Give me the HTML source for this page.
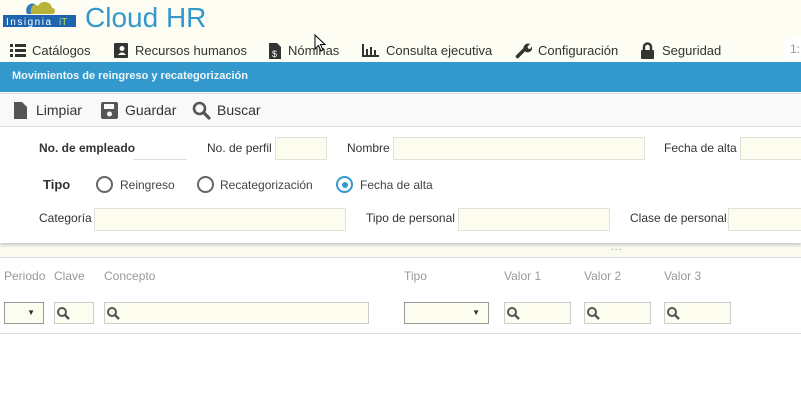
<!DOCTYPE html>
<html><head><meta charset="utf-8"><style>
*{box-sizing:border-box;margin:0;padding:0}
body{width:801px;height:405px;overflow:hidden;background:#fff;font-family:"Liberation Sans",sans-serif;position:relative;color:#333}
.a{position:absolute;white-space:nowrap}
.inp{position:absolute;background:#fdfdef;border:1px solid #e2e2d8}
.m{font-size:13px;color:#333;top:43px}
.l{font-size:12px;color:#333}
.g{font-size:12px;color:#999;top:269px}
.f{position:absolute;top:302px;height:22px;background:#fdfdef;border:1px solid #ccc}
.sel{position:absolute;top:302px;height:22px;background:#fdfdef;border:1px solid #999}
.sel:after{content:"▼";position:absolute;right:8px;top:5px;font-size:8px;color:#333}
.rad{position:absolute;width:17px;height:17px;border:2px solid #666;border-radius:50%;top:176px}
</style></head><body>
<div class="a" style="left:0;top:0;width:801px;height:62px;background:#fdfdf3"></div>
<svg class="a" style="left:3px;top:0" width="75" height="28" viewBox="0 0 75 28">
<path d="M24 14 C22 6 30 2 35 6 C38 0 48 1 49 8 C53 8 53 14 49 14 Z" fill="#b7b339"/>
<path d="M24 14 C21 7 27 2 32 4 C28 6 27 10 28 14 Z" fill="#2b7bc0"/>
<rect x="0" y="15" width="73" height="12" fill="#1f64b0"/>
<text x="3" y="25" font-size="10" fill="#fff" font-family="Liberation Sans" textLength="45">Insignia</text>
<text x="56" y="25" font-size="10" fill="#b7e060" font-family="Liberation Sans">iT</text>
</svg>
<div class="a" style="left:85px;top:2px;font-size:28px;color:#3399cc">Cloud HR</div>
<svg class="a" style="left:10px;top:44px" width="16" height="13"><g fill="#333"><rect x="0" y="0" width="3" height="3"/><rect x="0" y="5" width="3" height="3"/><rect x="0" y="10" width="3" height="3"/><rect x="5" y="0" width="11" height="3"/><rect x="5" y="5" width="11" height="3"/><rect x="5" y="10" width="11" height="3"/></g></svg>
<div class="a m" style="left:32px">Catálogos</div>
<svg class="a" style="left:114px;top:43px" width="14" height="15"><rect width="14" height="15" rx="1" fill="#333"/><circle cx="8" cy="5.5" r="2.5" fill="#fdfdf3"/><path d="M4 12 Q8 7 12 12Z" fill="#fdfdf3"/></svg>
<div class="a m" style="left:135px">Recursos humanos</div>
<svg class="a" style="left:269px;top:43px" width="12" height="16"><path d="M0 0H8L12 4V16H0Z" fill="#333"/><text x="3" y="14" font-size="9" fill="#fdfdf3" font-family="Liberation Sans">$</text></svg>
<div class="a m" style="left:288px">Nóminas</div>
<svg class="a" style="left:362px;top:44px" width="17" height="13"><g fill="#333"><rect x="0" y="0" width="2" height="13"/><rect x="0" y="11" width="17" height="2"/><rect x="4" y="5" width="2" height="6"/><rect x="8" y="3" width="2" height="8"/><rect x="12" y="6" width="2" height="5"/></g></svg>
<div class="a m" style="left:386px">Consulta ejecutiva</div>
<svg class="a" style="left:515px;top:42px" width="17" height="17"><path d="M2.5 14.5 L10 7" stroke="#333" stroke-width="3.5" stroke-linecap="round"/><path d="M9 8 A4.5 4.5 0 0 1 15 2 L12.5 4.5 L13 6.5 L15 7 L17 4.5 A4.5 4.5 0 0 1 11 10Z" fill="#333"/></svg>
<div class="a m" style="left:538px">Configuración</div>
<svg class="a" style="left:640px;top:42px" width="15" height="17"><path d="M4 8V5A3.5 3.5 0 0 1 11 5V8" stroke="#333" stroke-width="2.5" fill="none"/><rect x="1" y="8" width="13" height="9" rx="1" fill="#333"/></svg>
<div class="a m" style="left:662px">Seguridad</div>
<div class="a" style="left:786px;top:38px;width:15px;height:22px;background:#fff;font-size:12px;color:#999;padding:4px 0 0 4px">1:</div>
<div class="a" style="left:0;top:62px;width:801px;height:30px;background:#3399cc"></div>
<div class="a" style="left:12px;top:70px;font-size:11px;font-weight:bold;color:#eef6fb">Movimientos de reingreso y recategorización</div>
<div class="a" style="left:0;top:93px;width:801px;height:34px;background:#f9f9f9;border-top:1px solid #ddd;border-bottom:1px solid #e4e4e4"></div>
<svg class="a" style="left:14px;top:102px" width="13" height="17"><path d="M0 0H8L13 5V17H0Z" fill="#555"/></svg>
<div class="a" style="left:36px;top:102px;font-size:14px">Limpiar</div>
<svg class="a" style="left:101px;top:102px" width="17" height="17"><rect width="17" height="17" rx="2" fill="#555"/><rect x="3" y="2" width="10" height="5" fill="#f9f9f9"/><circle cx="8.5" cy="12" r="2.5" fill="#f9f9f9"/></svg>
<div class="a" style="left:125px;top:102px;font-size:14px">Guardar</div>
<svg class="a" style="left:192px;top:101px" width="19" height="19"><circle cx="7.5" cy="7.5" r="5.5" stroke="#555" stroke-width="2.6" fill="none"/><path d="M11.5 11.5 L17 17" stroke="#555" stroke-width="3.2" stroke-linecap="round"/></svg>
<div class="a" style="left:217px;top:102px;font-size:14px">Buscar</div>
<div class="a" style="left:0;top:243px;width:801px;height:15px;background:#fafaee;border-bottom:1px solid #ddd"></div>
<div class="a" style="left:0;top:127px;width:801px;height:116px;background:#fff;box-shadow:0 2px 3px #c8c8c8"></div>
<div class="a l" style="left:39px;top:141px;font-weight:bold">No. de empleado</div>
<div class="a" style="left:133px;top:159px;width:54px;height:1px;background:#ddd"></div>
<div class="a l" style="left:207px;top:141px">No. de perfil</div>
<div class="inp" style="left:275px;top:137px;width:52px;height:23px"></div>
<div class="a l" style="left:347px;top:141px">Nombre</div>
<div class="inp" style="left:393px;top:137px;width:252px;height:23px"></div>
<div class="a l" style="left:664px;top:141px">Fecha de alta</div>
<div class="inp" style="left:740px;top:137px;width:70px;height:23px"></div>
<div class="a" style="left:43px;top:177px;font-size:13px;font-weight:bold">Tipo</div>
<div class="rad" style="left:96px"></div>
<div class="a l" style="left:120px;top:178px;color:#444">Reingreso</div>
<div class="rad" style="left:197px"></div>
<div class="a l" style="left:220px;top:178px;color:#444">Recategorización</div>
<div class="rad" style="left:336px;border-color:#3399cc"><div style="position:absolute;left:3.5px;top:3.5px;width:6px;height:6px;border-radius:50%;background:#3399cc"></div></div>
<div class="a l" style="left:360px;top:178px;color:#444">Fecha de alta</div>
<div class="a l" style="left:39px;top:211px">Categoría</div>
<div class="inp" style="left:94px;top:208px;width:252px;height:23px"></div>
<div class="a l" style="left:366px;top:211px">Tipo de personal</div>
<div class="inp" style="left:458px;top:208px;width:152px;height:23px"></div>
<div class="a l" style="left:630px;top:211px">Clase de personal</div>
<div class="inp" style="left:728px;top:208px;width:80px;height:23px"></div>
<div class="a" style="left:611px;top:242px;font-size:10px;color:#888;letter-spacing:1px">...</div>
<div class="a g" style="left:4px">Periodo</div>
<div class="a g" style="left:54px">Clave</div>
<div class="a g" style="left:104px">Concepto</div>
<div class="a g" style="left:404px">Tipo</div>
<div class="a g" style="left:504px">Valor 1</div>
<div class="a g" style="left:584px">Valor 2</div>
<div class="a g" style="left:664px">Valor 3</div>
<div class="sel" style="left:4px;width:40px"></div>
<div class="sel" style="left:404px;width:85px"></div>
<div class="f" style="left:54px;width:40px"></div>
<div class="f" style="left:104px;width:265px"></div>
<div class="f" style="left:504px;width:67px"></div>
<div class="f" style="left:584px;width:67px"></div>
<div class="f" style="left:664px;width:67px"></div>
<svg class="a" style="left:0;top:305px" width="700" height="16"><g stroke="#555" fill="none">
<circle cx="62" cy="7" r="4" stroke-width="2"/><path d="M65 10L69 14" stroke-width="2.5"/>
<circle cx="112" cy="7" r="4" stroke-width="2"/><path d="M115 10L119 14" stroke-width="2.5"/>
<circle cx="512" cy="7" r="4" stroke-width="2"/><path d="M515 10L519 14" stroke-width="2.5"/>
<circle cx="592" cy="7" r="4" stroke-width="2"/><path d="M595 10L599 14" stroke-width="2.5"/>
<circle cx="672" cy="7" r="4" stroke-width="2"/><path d="M675 10L679 14" stroke-width="2.5"/>
</g></svg>
<div class="a" style="left:0;top:333px;width:801px;height:1px;background:#ddd"></div>
<svg class="a" style="left:314px;top:34px" width="12" height="18"><path d="M1 1V15L4.5 11.5L7 17L9 16L6.5 10.5H11Z" fill="#fff" stroke="#000" stroke-width="1"/></svg>
</body></html>
